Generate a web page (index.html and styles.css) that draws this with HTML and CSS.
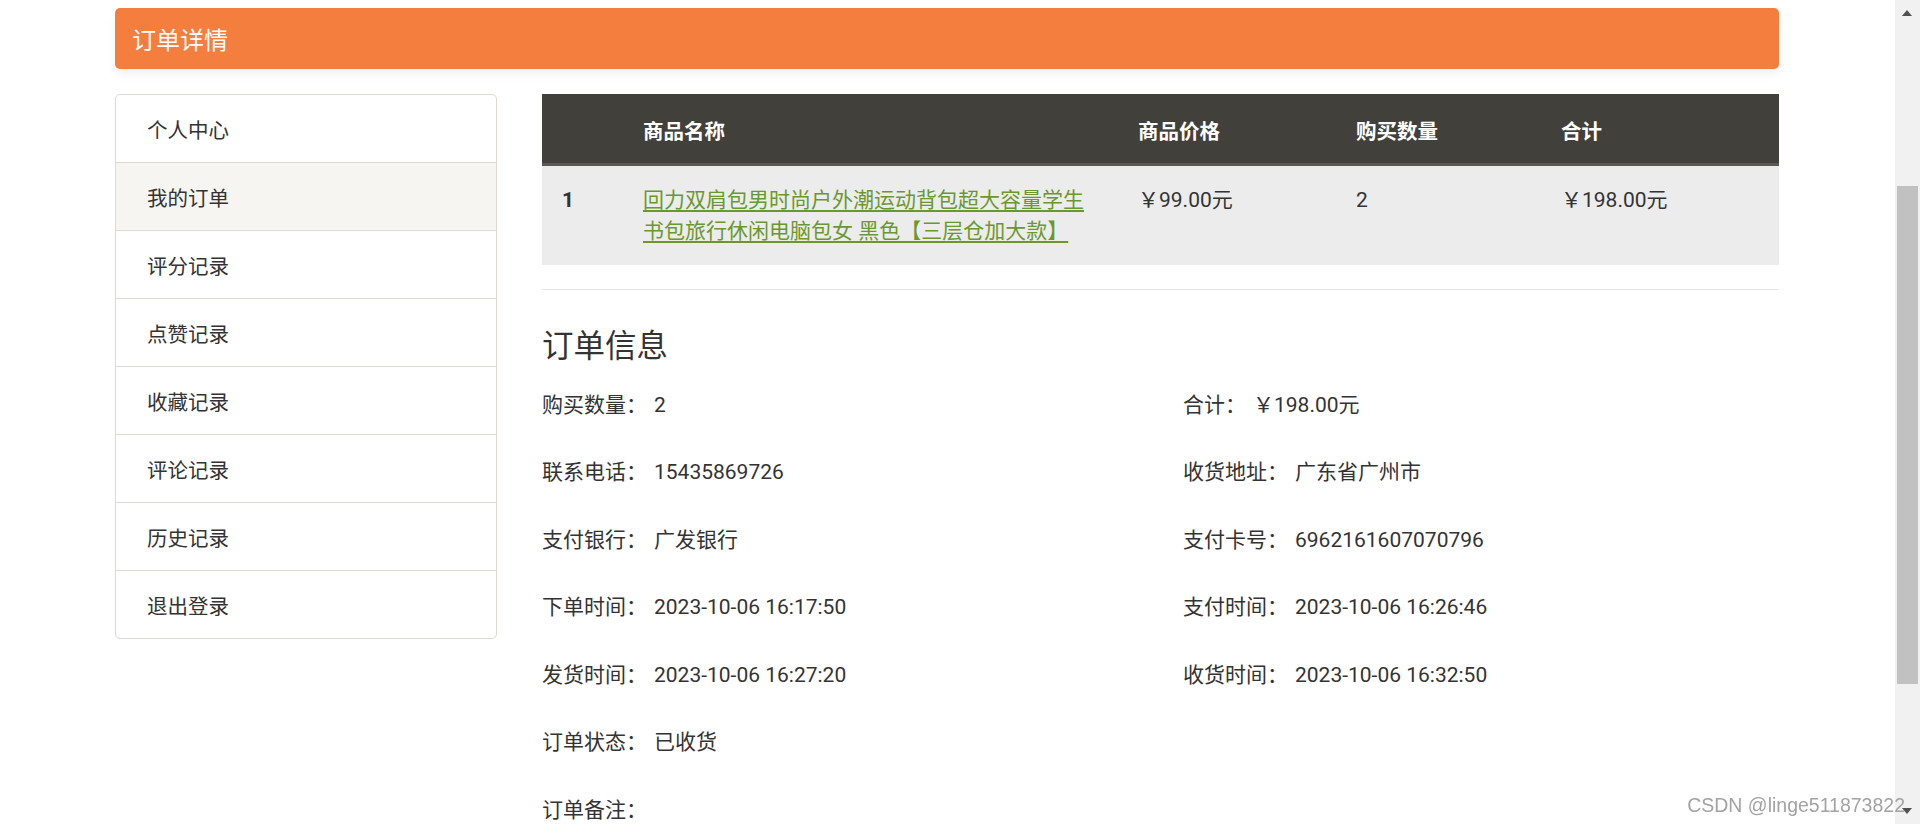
FILE: index.html
```html
<!DOCTYPE html>
<html lang="zh-CN">
<head>
<meta charset="utf-8">
<title>订单详情</title>
<link rel="stylesheet" href="styles.css">
</head>
<body>
<div class="page">
  <div class="container">
    <div class="title-bar">订单详情</div>
    <div class="layout">
      <ul class="side-nav">
        <li class="nav-item">个人中心</li>
        <li class="nav-item active">我的订单</li>
        <li class="nav-item">评分记录</li>
        <li class="nav-item">点赞记录</li>
        <li class="nav-item">收藏记录</li>
        <li class="nav-item">评论记录</li>
        <li class="nav-item">历史记录</li>
        <li class="nav-item">退出登录</li>
      </ul>
      <div class="main">
        <table class="goods">
          <thead>
            <tr>
              <th class="c-no"></th>
              <th class="c-name">商品名称</th>
              <th class="c-price">商品价格</th>
              <th class="c-qty">购买数量</th>
              <th class="c-total">合计</th>
            </tr>
          </thead>
          <tbody>
            <tr>
              <td class="c-no num">1</td>
              <td class="c-name"><a class="goods-link" href="#">回力双肩包男时尚户外潮运动背包超大容量学生书包旅行休闲电脑包女 黑色【三层仓加大款】</a></td>
              <td class="c-price">￥99.00元</td>
              <td class="c-qty">2</td>
              <td class="c-total">￥198.00元</td>
            </tr>
          </tbody>
        </table>
        <div class="divider"></div>
        <h3 class="info-title">订单信息</h3>
        <div class="info-grid">
          <div class="info-item"><span class="label">购买数量：</span><span class="value">2</span></div>
          <div class="info-item"><span class="label">合计：</span><span class="value">￥198.00元</span></div>
          <div class="info-item"><span class="label">联系电话：</span><span class="value">15435869726</span></div>
          <div class="info-item"><span class="label">收货地址：</span><span class="value">广东省广州市</span></div>
          <div class="info-item"><span class="label">支付银行：</span><span class="value">广发银行</span></div>
          <div class="info-item"><span class="label">支付卡号：</span><span class="value">6962161607070796</span></div>
          <div class="info-item"><span class="label">下单时间：</span><span class="value">2023-10-06 16:17:50</span></div>
          <div class="info-item"><span class="label">支付时间：</span><span class="value">2023-10-06 16:26:46</span></div>
          <div class="info-item"><span class="label">发货时间：</span><span class="value">2023-10-06 16:27:20</span></div>
          <div class="info-item"><span class="label">收货时间：</span><span class="value">2023-10-06 16:32:50</span></div>
          <div class="info-item"><span class="label">订单状态：</span><span class="value">已收货</span></div>
          <div class="info-item"></div>
          <div class="info-item"><span class="label">订单备注：</span><span class="value"></span></div>
          <div class="info-item"></div>
        </div>
      </div>
    </div>
  </div>
</div>
<div class="scrollbar">
  <span class="arrow-up"></span>
  <span class="thumb"></span>
  <span class="arrow-down"></span>
</div>
<div class="watermark">CSDN @linge511873822</div>
</body>
</html>
```
FILE: styles.css
```css
html, body {
  margin: 0;
  padding: 0;
  overflow: hidden;
  background: #ffffff;
}

body {
  font-family: Roboto, "Noto Sans CJK SC", sans-serif;
  font-size: 21px;
  color: #333333;
}

.page {
  width: 1894px;
}

.container {
  width: 1664px;
  margin: 0 auto;
  padding-top: 8px;
}

.title-bar {
  height: 56px;
  line-height: 56px;
  padding: 5px 0 0 17px;
  background: #f47e3e;
  color: #ffffff;
  font-size: 24px;
  border-radius: 5px;
  box-shadow: 0 5px 10px rgba(0, 0, 0, 0.06);
}

.layout {
  display: flex;
  align-items: flex-start;
  gap: 45px;
  margin-top: 25px;
}

.side-nav {
  list-style: none;
  margin: 0;
  padding: 0;
  width: 380px;
  flex: none;
  border: 1px solid #e0d9ce;
  border-radius: 5px;
  overflow: hidden;
}

.nav-item {
  height: 62px;
  line-height: 62px;
  padding: 5px 0 0 31px;
  color: #333333;
  font-size: 20.5px;
  border-top: 1px solid #e0d9ce;
}

.nav-item:first-child {
  border-top: none;
}

.nav-item.active {
  background: #f7f5f1;
}

.main {
  width: 1237px;
  flex: none;
}

.goods {
  width: 1237px;
  border-collapse: separate;
  border-spacing: 0;
  table-layout: fixed;
}

.goods th {
  background: #41403b;
  color: #ffffff;
  font-weight: 700;
  font-size: 20.5px;
  text-align: left;
  padding: 7px 20px 0;
  height: 62px;
  line-height: 62px;
  border-bottom: 3px solid #5a5954;
}

.goods td {
  background: #ececec;
  padding: 19px 20px 18px;
  line-height: 31px;
  vertical-align: top;
  text-align: left;
  color: #333333;
}

.goods .num {
  font-weight: 700;
}

.c-no { width: 41px; }
.c-name { width: 455px; }
.c-price { width: 178px; }
.c-qty { width: 165px; }
.c-total { width: 198px; }

.goods-link {
  color: #6b982e;
  text-decoration: underline;
  text-decoration-thickness: 2px;
  text-underline-offset: 3px;
}

.divider {
  height: 1px;
  background: #e5e5e5;
  margin-top: 24px;
}

.info-title {
  margin: 38px 0 4px;
  font-size: 31.5px;
  line-height: 38px;
  font-weight: 400;
  color: #333333;
}

.info-grid {
  display: grid;
  grid-template-columns: 596px 596px;
  column-gap: 45px;
  grid-auto-rows: 67.5px;
  align-items: center;
}

.info-item {
  line-height: 30px;
  padding-top: 2px;
  white-space: nowrap;
}

.info-item .value {
  margin-left: 7px;
}

.scrollbar {
  position: fixed;
  top: 0;
  right: 0;
  width: 25px;
  height: 824px;
  background: #f1f1f1;
}

.arrow-up {
  position: absolute;
  left: 7px;
  top: 10px;
  width: 0;
  height: 0;
  border-left: 5px solid transparent;
  border-right: 5px solid transparent;
  border-bottom: 6px solid #505050;
}

.thumb {
  position: absolute;
  left: 2px;
  top: 186px;
  width: 21px;
  height: 498px;
  background: #c1c1c1;
}

.arrow-down {
  position: absolute;
  left: 7px;
  top: 808px;
  width: 0;
  height: 0;
  border-left: 5px solid transparent;
  border-right: 5px solid transparent;
  border-top: 6px solid #505050;
}

.watermark {
  position: fixed;
  right: 15px;
  top: 793px;
  font-family: "Liberation Sans", Arial, sans-serif;
  font-size: 19.5px;
  line-height: 24px;
  color: #a3a3a3;
}
```
